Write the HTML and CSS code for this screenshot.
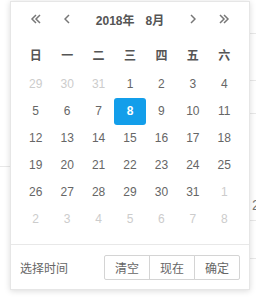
FILE: index.html
```html
<!DOCTYPE html>
<html lang="zh">
<head>
  <meta charset="UTF-8">
  <title>日期选择</title>
  <link rel="stylesheet" href="styles.css">
</head>
<body>
  <div class="page">
    <div class="strip strip-left">
      <div class="cell" style="height:166px"></div>
      <div class="cell line"></div>
    </div>
    <div class="strip strip-right">
      <div class="cell" style="height:33px"></div>
      <div class="cell line" style="height:47px"></div>
      <div class="cell line" style="height:33px"></div>
      <div class="cell line num" style="height:107px">2</div>
      <div class="cell line" style="height:38px"></div>
      <div class="cell line"></div>
    </div>
  </div>

  <div class="picker">
    <div class="picker-head">
      <span class="nav">
        <svg width="12" height="10" viewBox="0 0 12 10"><path d="M6 1L2 5l4 4M10 1L6 5l4 4" fill="none" stroke="#777" stroke-width="1.5"/></svg>
      </span>
      <span class="nav">
        <svg width="6" height="10" viewBox="0 0 6 10"><path d="M5 1L1 5l4 4" fill="none" stroke="#777" stroke-width="1.5"/></svg>
      </span>
      <span class="title"><span>2018年</span><span>8月</span></span>
      <span class="nav">
        <svg width="6" height="10" viewBox="0 0 6 10"><path d="M1 1l4 4-4 4" fill="none" stroke="#777" stroke-width="1.5"/></svg>
      </span>
      <span class="nav">
        <svg width="12" height="10" viewBox="0 0 12 10"><path d="M2 1l4 4-4 4M6 1l4 4-4 4" fill="none" stroke="#777" stroke-width="1.5"/></svg>
      </span>
    </div>

    <div class="picker-body">
      <div class="week">
        <span>日</span><span>一</span><span>二</span><span>三</span><span>四</span><span>五</span><span>六</span>
      </div>
      <div class="days">
        <span class="other">29</span><span class="other">30</span><span class="other">31</span><span>1</span><span>2</span><span>3</span><span>4</span>
        <span>5</span><span>6</span><span>7</span><span class="active">8</span><span>9</span><span>10</span><span>11</span>
        <span>12</span><span>13</span><span>14</span><span>15</span><span>16</span><span>17</span><span>18</span>
        <span>19</span><span>20</span><span>21</span><span>22</span><span>23</span><span>24</span><span>25</span>
        <span>26</span><span>27</span><span>28</span><span>29</span><span>30</span><span>31</span><span class="other">1</span>
        <span class="other">2</span><span class="other">3</span><span class="other">4</span><span class="other">5</span><span class="other">6</span><span class="other">7</span><span class="other">8</span>
      </div>
    </div>

    <div class="picker-foot">
      <span class="label">选择时间</span>
      <div class="btn-group">
        <button class="btn">清空</button>
        <button class="btn">现在</button>
        <button class="btn">确定</button>
      </div>
    </div>
  </div>
</body>
</html>
```

FILE: styles.css
```css
body {
  margin: 0;
  font-family: "Liberation Sans", "Noto Sans CJK SC", sans-serif;
  font-size: 12px;
  color: #666;
  background: #fff;
}

.page {
  width: 256px;
  height: 297px;
  display: flex;
  justify-content: space-between;
}

.strip-left {
  width: 10px;
}

.strip-right {
  width: 6px;
}

.cell.line {
  border-top: 1px solid #e8e8e8;
  box-sizing: border-box;
}

.cell.num {
  padding-top: 83px;
  padding-left: 2px;
  font-size: 14px;
  color: #777;
}

.picker {
  position: absolute;
  top: 1px;
  left: 10px;
  width: 238px;
  height: 287px;
  border: 1px solid #e6e6e6;
  background: #fff;
  box-shadow: 0 1px 6px rgba(0, 0, 0, 0.15);
}

.picker-head {
  display: grid;
  grid-template-columns: repeat(2, 1fr) 3fr repeat(2, 1fr);
  width: 220px;
  margin: 0 9px;
  height: 34px;
  align-items: center;
}

.nav {
  display: flex;
  justify-content: center;
  align-items: center;
}

.title {
  display: flex;
  justify-content: center;
  gap: 11px;
  font-weight: bold;
  color: #555;
}

.picker-body {
  padding: 5px 9px 11px;
  border-bottom: 1px solid #e8e8e8;
}

.week,
.days {
  display: grid;
  grid-template-columns: repeat(7, 1fr);
  text-align: center;
}

.week span {
  height: 30px;
  line-height: 30px;
  font-weight: bold;
  color: #555;
}

.days span {
  height: 27px;
  line-height: 27px;
}

.days .other {
  color: #ccc;
}

.days .active {
  background: #139eea;
  color: #fff;
  font-weight: bold;
  border-radius: 3px;
}

.picker-foot {
  display: flex;
  justify-content: space-between;
  align-items: center;
  padding: 10px 9px;
}

.btn-group {
  display: flex;
}

.btn {
  width: 46px;
  height: 25px;
  margin-left: -1px;
  padding: 0;
  border: 1px solid #d4d4d4;
  background: #fff;
  font-family: inherit;
  font-size: 12px;
  color: #666;
}

.btn:first-child {
  border-radius: 2px 0 0 2px;
}

.btn:last-child {
  border-radius: 0 2px 2px 0;
}
```
